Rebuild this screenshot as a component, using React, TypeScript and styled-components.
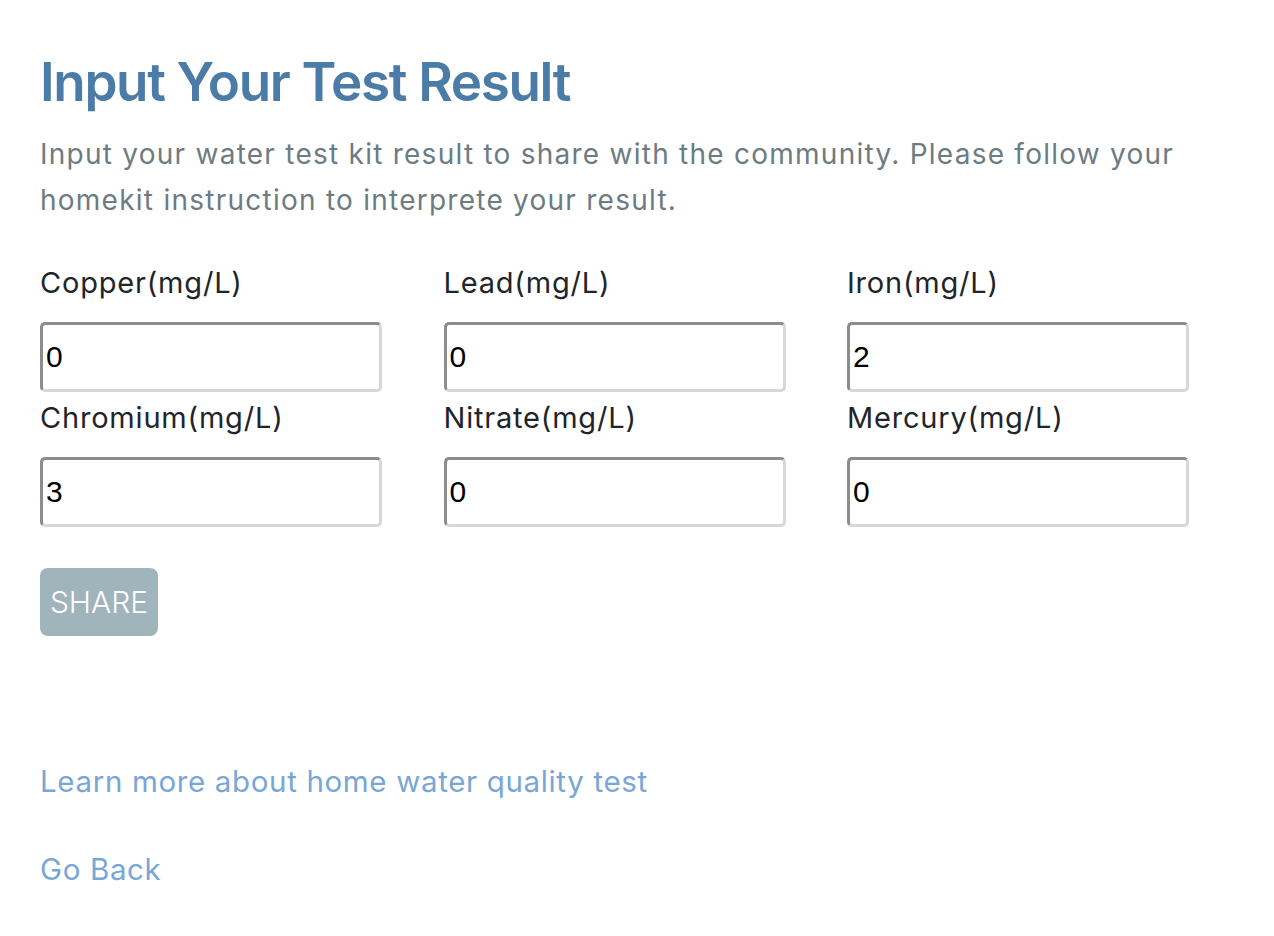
import React, { useState } from "react";
import styled, { createGlobalStyle } from "styled-components";

const GlobalStyle = createGlobalStyle`
    html, body {
        margin: 0;
        padding: 0;
        background: #ffffff;
    }
    body {
        font-family: Inter, "Noto Sans", "Liberation Sans", sans-serif;
        color: #212529;
    }
`;

const Page = styled.main`
    padding: 52px 40px 40px;
    max-width: 1160px;
`;

const Title = styled.h1`
    margin: 0;
    font-size: 53px;
    line-height: 60px;
    font-weight: 600;
    letter-spacing: -1.35px;
    color: #4b7ba7;
`;

const Intro = styled.p`
    margin: 19px 0 42px;
    font-size: 28px;
    line-height: 46px;
    letter-spacing: 1.25px;
    color: #6d7b82;
`;

const Grid = styled.div`
    display: grid;
    grid-template-columns: repeat(3, 342px);
    column-gap: 61.5px;
    row-gap: 8px;
`;

const Field = styled.div`
    display: flex;
    flex-direction: column;
`;

const Label = styled.label`
    font-size: 29px;
    line-height: 36px;
    letter-spacing: 0.8px;
    margin-bottom: 21px;
    color: #212529;
`;

const Input = styled.input`
    box-sizing: border-box;
    height: 70px;
    width: 100%;
    padding: 0 3px;
    border: 3px solid;
    border-color: #8c8c8c #d8d8d8 #d8d8d8 #8c8c8c;
    border-radius: 5px;
    font-family: "Liberation Sans", Arial, sans-serif;
    font-size: 30px;
    color: #000;
    background: #fff;
    outline: none;
`;

const ShareButton = styled.button`
    margin-top: 41px;
    width: 118px;
    height: 68px;
    border: none;
    border-radius: 8px;
    background: #a0b4bb;
    color: #ffffff;
    font-family: Inter, "Noto Sans", sans-serif;
    font-size: 30px;
    font-weight: 300;
    padding: 0;
    cursor: pointer;
`;

const Links = styled.div`
    display: flex;
    flex-direction: column;
    align-items: flex-start;
    gap: 52px;
    margin-top: 127px;
`;

const TextLink = styled.a`
    font-size: 29.5px;
    line-height: 36px;
    letter-spacing: 0.65px;
    color: #78a6d6;
    text-decoration: none;
`;

const fields = [
    { name: "copper", label: "Copper(mg/L)", value: "0" },
    { name: "lead", label: "Lead(mg/L)", value: "0" },
    { name: "iron", label: "Iron(mg/L)", value: "2" },
    { name: "chromium", label: "Chromium(mg/L)", value: "3" },
    { name: "nitrate", label: "Nitrate(mg/L)", value: "0" },
    { name: "mercury", label: "Mercury(mg/L)", value: "0" },
];

export default function App() {
    const [values, setValues] = useState<Record<string, string>>(
        Object.fromEntries(fields.map((f) => [f.name, f.value]))
    );

    return (
        <>
            <GlobalStyle />
            <Page>
                <Title>Input Your Test Result</Title>
                <Intro>
                    Input your water test kit result to share with the
                    community. Please follow your homekit instruction to
                    interprete your result.
                </Intro>
                <Grid>
                    {fields.map((f) => (
                        <Field key={f.name}>
                            <Label htmlFor={f.name}>{f.label}</Label>
                            <Input
                                id={f.name}
                                value={values[f.name]}
                                onChange={(e) =>
                                    setValues({ ...values, [f.name]: e.target.value })
                                }
                            />
                        </Field>
                    ))}
                </Grid>
                <ShareButton type="button">SHARE</ShareButton>
                <Links>
                    <TextLink href="#">Learn more about home water quality test</TextLink>
                    <TextLink href="#">Go Back</TextLink>
                </Links>
            </Page>
        </>
    );
}
